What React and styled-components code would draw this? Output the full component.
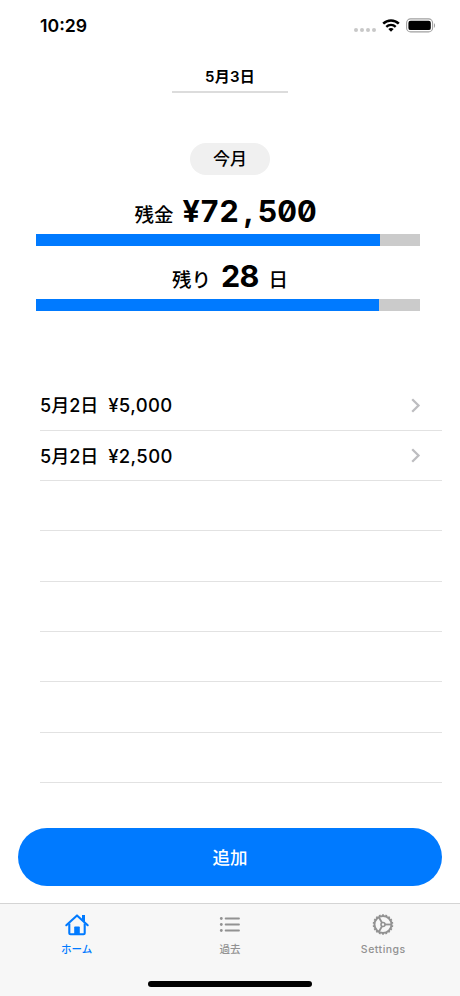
import React from "react";
import styled, { createGlobalStyle } from "styled-components";

const colors = {
  blue: "#007aff",
  track: "#cbcbcb",
  line: "#e2e2e2",
  gray: "#929292",
};

const entries = [
  { date: "5月2日", price: "¥5,000" },
  { date: "5月2日", price: "¥2,500" },
];

const EMPTY_ROWS = 6;

function WifiIcon() {
  return (
    <svg width="18" height="13" viewBox="0 0 18 13" fill="none">
      <path d="M1.2 4.7C5.5 .4 12.5 .4 16.8 4.7" stroke="#000" strokeWidth="2.5" />
      <path d="M4.3 7.9C6.9 5.3 11.1 5.3 13.7 7.9" stroke="#000" strokeWidth="2.3" />
      <path d="M6.3 10.1C7.8 8.6 10.2 8.6 11.7 10.1L9 12.8Z" fill="#000" />
    </svg>
  );
}

function BatteryIcon() {
  return (
    <svg width="30" height="15" viewBox="0 0 30 15" fill="none">
      <rect x=".6" y=".9" width="26" height="13" rx="4" stroke="#a0a0a0" strokeWidth="1.1" />
      <rect x="2.4" y="2.7" width="22.4" height="9.4" rx="2.2" fill="#000" />
      <path d="M28 5.2C29.4 5.8 29.4 9.2 28 9.8Z" fill="#a0a0a0" />
    </svg>
  );
}

function ChevronIcon() {
  return (
    <svg width="10" height="15" viewBox="0 0 10 15" fill="none">
      <path d="M1.2 1.2L7.5 7.5L1.2 13.8" stroke="#bdbdc0" strokeWidth="2.3" />
    </svg>
  );
}

function HomeIcon() {
  return (
    <svg width="26" height="24" viewBox="0 0 26 24" fill="none">
      <path
        d="M2.3 12.2L13 2.4L23.7 12.2"
        stroke="currentColor"
        strokeWidth="2.1"
        strokeLinecap="round"
        strokeLinejoin="round"
      />
      <path
        d="M5.3 10.5V20.3Q5.3 21.3 6.5 21.3H19.5Q20.7 21.3 20.7 20.3V10.5"
        stroke="currentColor"
        strokeWidth="2.1"
      />
      <path d="M18 2H21V9.2L18 6.6Z" fill="currentColor" />
      <path d="M10.2 21V14.2Q10.2 13.4 11 13.4H15Q15.8 13.4 15.8 14.2V21Z" fill="currentColor" />
    </svg>
  );
}

function ListIcon() {
  return (
    <svg width="26" height="24" viewBox="0 0 26 24" fill="none">
      {[5.5, 11.5, 17.5].map((y) => (
        <g key={y}>
          <circle cx="4.3" cy={y} r="1.4" fill="currentColor" />
          <path d={`M8.6 ${y}H22`} stroke="currentColor" strokeWidth="1.8" strokeLinecap="round" />
        </g>
      ))}
    </svg>
  );
}

function GearIcon() {
  const teeth = Array.from({ length: 18 }, (_, i) => i * 20);
  return (
    <svg width="26" height="24" viewBox="0 0 26 24" fill="none" stroke="currentColor">
      <circle cx="13" cy="11.5" r="8.5" strokeWidth="1.9" />
      {teeth.map((deg) => (
        <path key={deg} d="M13 3V1.2" strokeWidth="1.8" transform={`rotate(${deg} 13 11.5)`} />
      ))}
      <circle cx="13" cy="11.5" r="2" strokeWidth="1.6" />
      {[90, 210, 330].map((deg) => (
        <path key={deg} d="M13 9.5V3.5" strokeWidth="1.8" transform={`rotate(${deg} 13 11.5)`} />
      ))}
    </svg>
  );
}

const tabs = [
  { label: "ホーム", icon: <HomeIcon />, active: true },
  { label: "過去", icon: <ListIcon /> },
  { label: "Settings", icon: <GearIcon />, spacing: "0.5px" },
];

function App() {
  return (
    <Screen>
      <GlobalStyle />
      <StatusBar>
        <Clock>10:29</Clock>
        <StatusIcons>
          <Signal>
            <SignalDot />
            <SignalDot />
            <SignalDot />
            <SignalDot />
          </Signal>
          <WifiIcon />
          <BatteryIcon />
        </StatusIcons>
      </StatusBar>

      <DateField>5月3日</DateField>
      <Period>今月</Period>

      <Summary>
        <SummaryLine>
          <Caption>残金</Caption>
          <Amount>
            ¥72<Comma>,</Comma>500
          </Amount>
        </SummaryLine>
        <Track>
          <Bar $width="89.6%" />
        </Track>
        <SummaryLine>
          <Caption>残り</Caption>
          <Days>28</Days>
          <Caption>日</Caption>
        </SummaryLine>
        <Track>
          <Bar $width="89.3%" />
        </Track>
      </Summary>

      <List>
        {entries.map((entry) => (
          <Row key={entry.price}>
            <Entry>
              <span>{entry.date}</span>
              <Price>{entry.price}</Price>
            </Entry>
            <ChevronIcon />
          </Row>
        ))}
        {Array.from({ length: EMPTY_ROWS }, (_, index) => (
          <Row key={index} />
        ))}
      </List>

      <AddButton>追加</AddButton>

      <TabBar>
        <Tabs>
          {tabs.map((tab) => (
            <Tab key={tab.label} $active={tab.active} $spacing={tab.spacing}>
              {tab.icon}
              {tab.label}
            </Tab>
          ))}
        </Tabs>
        <HomeIndicator />
      </TabBar>
    </Screen>
  );
}

export default App;

const GlobalStyle = createGlobalStyle`
  * {
    box-sizing: border-box;
  }
  body {
    margin: 0;
    background: #fff;
  }
  svg {
    display: block;
    flex: none;
  }
`;

const Screen = styled.div`
  display: flex;
  flex-direction: column;
  align-items: center;
  width: 460px;
  height: 996px;
  overflow: hidden;
  background: #fff;
  color: #000;
  font-family: Inter, "Noto Sans CJK JP", sans-serif;
  font-weight: 500;
`;

const StatusBar = styled.div`
  display: flex;
  justify-content: space-between;
  align-items: center;
  width: 100%;
  height: 60px;
  padding: 0 24px 9px 40px;
`;

const Clock = styled.div`
  font-size: 17.7px;
  font-weight: 600;
  line-height: 22px;
`;

const StatusIcons = styled.div`
  display: flex;
  align-items: center;
  gap: 6px;
`;

const Signal = styled.div`
  display: flex;
  gap: 2px;
  padding-top: 9px;
`;

const SignalDot = styled.span`
  width: 4px;
  height: 4px;
  border-radius: 50%;
  background: #c8c8c8;
`;

const DateField = styled.div`
  width: 116px;
  height: 33px;
  padding-top: 7px;
  border-bottom: 2px solid #dcdcdc;
  font-size: 15px;
  font-weight: 600;
  line-height: 20px;
  letter-spacing: 0.2px;
  text-align: center;
`;

const Period = styled.div`
  width: 80px;
  height: 32px;
  margin-top: 50px;
  border-radius: 16px;
  background: #f0f0f0;
  font-size: 17px;
  line-height: 33px;
  text-align: center;
`;

const Summary = styled.div`
  width: 384px;
  margin: 6px 40px 0 36px;
  align-self: flex-start;
`;

const SummaryLine = styled.div`
  display: flex;
  justify-content: center;
  align-items: baseline;
  gap: 10px;
  width: 388px;
  height: 53px;
  line-height: 60px;
`;

const Caption = styled.span`
  font-size: 19.5px;
`;

const Amount = styled.span`
  margin: 0 9px 0 -1px;
  font-size: 30.5px;
  font-weight: 700;
  font-feature-settings: "tnum", "zero";
  letter-spacing: -0.2px;
`;

/* takes a full digit width, so the figures stay monospaced */
const Comma = styled.span`
  display: inline-block;
  width: 19px;
  text-align: center;
`;

const Days = styled.span`
  font-size: 30.5px;
  font-weight: 700;
  letter-spacing: -0.7px;
`;

const Track = styled.div`
  height: 12px;
  background: ${colors.track};
`;

const Bar = styled.div`
  width: ${(props) => props.$width};
  height: 100%;
  background: ${colors.blue};
`;

const List = styled.div`
  width: 402px;
  margin: 69.6px 18px 0 40px;
  align-self: flex-start;
`;

const Row = styled.div`
  display: flex;
  justify-content: space-between;
  align-items: center;
  height: 50.3px;
  padding-right: 21px;
  border-bottom: 1px solid ${colors.line};
`;

const Entry = styled.div`
  display: flex;
  align-items: baseline;
  padding-bottom: 2px;
  font-size: 18px;
`;

const Price = styled.span`
  margin-left: 10px;
  font-size: 18.5px;
  letter-spacing: 0.35px;
`;

const AddButton = styled.button`
  width: 424px;
  height: 58px;
  margin-top: 44.9px;
  border: none;
  border-radius: 29px;
  background: ${colors.blue};
  color: #fff;
  font: inherit;
  font-size: 17.5px;
  cursor: pointer;
`;

const TabBar = styled.div`
  display: flex;
  flex-direction: column;
  justify-content: space-between;
  align-items: center;
  width: 100%;
  height: 93px;
  margin-top: auto;
  padding-bottom: 9px;
  border-top: 1px solid #d4d4d4;
  background: #f7f7f7;
`;

const Tabs = styled.div`
  display: grid;
  grid-template-columns: repeat(3, 1fr);
  width: 100%;
`;

const Tab = styled.div`
  display: flex;
  flex-direction: column;
  align-items: center;
  gap: 6px;
  padding-top: 9px;
  color: ${(props) => (props.$active ? colors.blue : colors.gray)};
  font-size: 10.5px;
  line-height: 14px;
  letter-spacing: ${(props) => props.$spacing ?? "normal"};
`;

const HomeIndicator = styled.div`
  width: 164px;
  height: 6px;
  border-radius: 3px;
  background: #000;
`;
